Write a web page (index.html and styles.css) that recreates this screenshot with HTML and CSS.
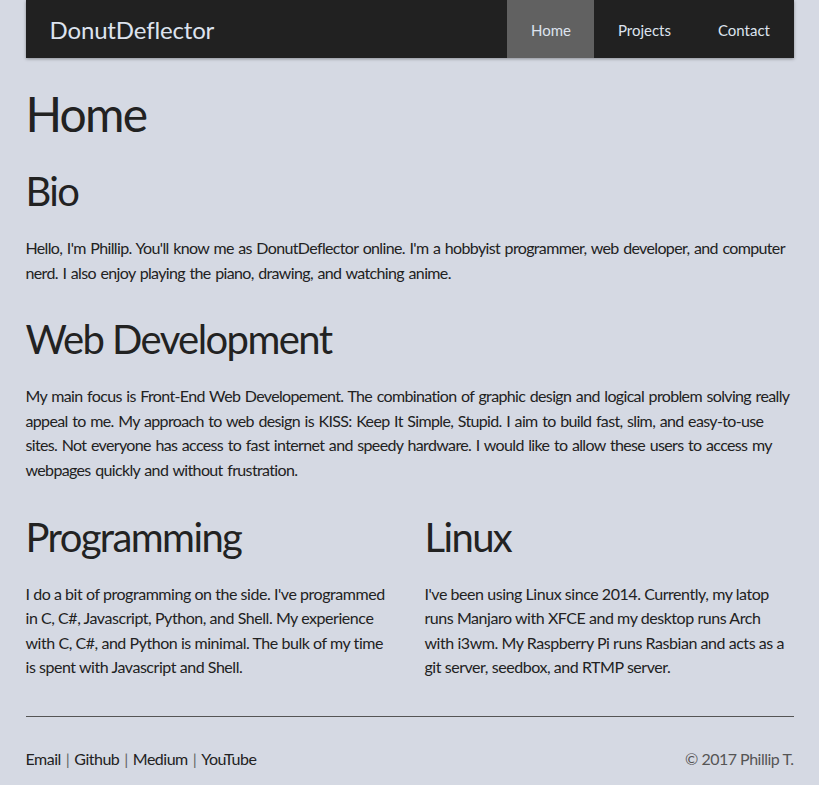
FILE: index.html
```html
<!DOCTYPE html>
<html lang="en">
<head>
<meta charset="utf-8">
<title>DonutDeflector</title>
<link rel="stylesheet" href="styles.css">
</head>
<body>
<div class="container">
  <nav class="navbar">
    <a class="brand" href="#">DonutDeflector</a>
    <ul class="nav">
      <li><a class="active" href="#">Home</a></li>
      <li><a href="#">Projects</a></li>
      <li><a href="#">Contact</a></li>
    </ul>
  </nav>
  <main class="content">
    <h1 class="page-title">Home</h1>
    <section class="block">
      <h2 class="heading">Bio</h2>
      <p class="text">Hello, I'm Phillip. You'll know me as DonutDeflector online. I'm a hobbyist programmer, web developer, and computer nerd. I also enjoy playing the piano, drawing, and watching anime.</p>
    </section>
    <section class="block">
      <h2 class="heading">Web Development</h2>
      <p class="text">My main focus is Front-End Web Developement. The combination of graphic design and logical problem solving really appeal to me. My approach to web design is KISS: Keep It Simple, Stupid. I aim to build fast, slim, and easy-to-use sites. Not everyone has access to fast internet and speedy hardware. I would like to allow these users to access my webpages quickly and without frustration.</p>
    </section>
    <div class="columns">
      <section class="block">
        <h2 class="heading">Programming</h2>
        <p class="text">I do a bit of programming on the side. I've programmed in C, C#, Javascript, Python, and Shell. My experience with C, C#, and Python is minimal. The bulk of my time is spent with Javascript and Shell.</p>
      </section>
      <section class="block">
        <h2 class="heading">Linux</h2>
        <p class="text">I've been using Linux since 2014. Currently, my latop runs Manjaro with XFCE and my desktop runs Arch with i3wm. My Raspberry Pi runs Rasbian and acts as a git server, seedbox, and RTMP server.</p>
      </section>
    </div>
  </main>
  <footer class="footer">
    <div class="links">
      <a href="#">Email</a><span class="sep">|</span><a href="#">Github</a><span class="sep">|</span><a href="#">Medium</a><span class="sep">|</span><a href="#">YouTube</a>
    </div>
    <div class="copy">© 2017 Phillip T.</div>
  </footer>
</div>
</body>
</html>
```
FILE: styles.css
```css
* { box-sizing: border-box; }
html, body { margin: 0; padding: 0; }
body {
  background: #d5d9e3;
  color: #222;
  font-family: Lato, "Open Sans", sans-serif;
  font-size: 16px;
}
a { color: inherit; text-decoration: none; }
.container {
  width: 768px;
  margin: 0 auto;
}
.navbar {
  display: flex;
  justify-content: space-between;
  align-items: stretch;
  height: 58px;
  background: #212121;
  box-shadow: 0 1px 3px rgba(0,0,0,0.35);
}
.brand {
  display: flex;
  align-items: center;
  padding-left: 24px;
  font-size: 24px;
  color: #dde3ee;
  letter-spacing: -0.15px;
}
.nav {
  display: flex;
  list-style: none;
  margin: 0;
  padding: 0;
}
.nav a {
  display: flex;
  align-items: center;
  height: 100%;
  padding: 1px 23.5px 0;
  font-size: 15px;
  color: #dde3ee;
}
.nav a.active { background: #616161; }
.content { padding-top: 28px; }
.page-title {
  margin: 0;
  font-size: 48px;
  font-weight: 400;
  line-height: 56px;
  letter-spacing: -1.8px;
}
.heading {
  margin: 0;
  font-size: 40px;
  font-weight: 400;
  line-height: 48px;
  letter-spacing: -1.6px;
}
.block { margin-top: 30px; }
.page-title + .block { margin-top: 25px; }
.text {
  margin: 21px 0 0;
  line-height: 24.6px;
  letter-spacing: -0.65px;
  word-spacing: 1.1px;
}
.columns {
  display: grid;
  grid-template-columns: 1fr 1fr;
  column-gap: 30px;
}
.columns .text {
  line-height: 24.5px;
  max-width: 364px;
  letter-spacing: -0.45px;
  word-spacing: 0;
}
.footer {
  margin-top: 36px;
  border-top: 1px solid #555;
  padding: 30px 0 20px;
  display: flex;
  justify-content: space-between;
  line-height: 24px;
  letter-spacing: -0.5px;
}
.sep { color: #666; margin: 0 5px; }
.copy { color: #555; }
```
